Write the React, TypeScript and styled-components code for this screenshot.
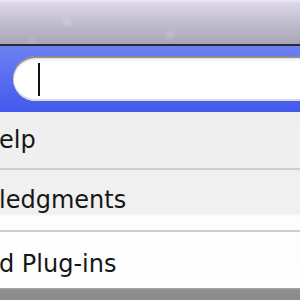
import React from "react";
import styled, { createGlobalStyle } from "styled-components";

const Global = createGlobalStyle`
  html, body { margin: 0; padding: 0; background: #8e8e8e; }
  #root { width: 300px; height: 300px; }
`;

const Frame = styled.div`
  width: 300px;
  height: 300px;
  overflow: hidden;
  display: flex;
  flex-direction: column;
  font-family: "DejaVu Sans", "Liberation Sans", sans-serif;
`;

const TitleBar = styled.div`
  height: 44px;
  flex: none;
  border-bottom: 2px solid #2b2a38;
  background:
    radial-gradient(circle at 67px 22px, rgba(255,255,255,0.22) 0, rgba(255,255,255,0) 7px),
    radial-gradient(circle at 170px 35px, rgba(255,255,255,0.18) 0, rgba(255,255,255,0) 7px),
    radial-gradient(circle at 32px 42px, rgba(255,255,255,0.14) 0, rgba(255,255,255,0) 6px),
    linear-gradient(#efecf6 0px, #dcd7ea 3px, #c4bfd3 20px, #aaa6b7 44px);
`;

const SearchBar = styled.div`
  height: 66px;
  flex: none;
  box-sizing: border-box;
  padding: 10px 0 0 13px;
  background: linear-gradient(#6d81f3, #4458ee);
`;

const Field = styled.div`
  height: 45px;
  margin-right: -40px;
  box-sizing: border-box;
  border-radius: 23px 0 0 23px;
  background: #fff;
  box-shadow:
    inset 0 2px 1px rgba(0, 0, 0, 0.42),
    inset 0 4px 3px rgba(0, 0, 0, 0.08),
    inset 0 -2px 0 #dcdcdc;
  display: flex;
  align-items: center;
  padding-left: 25px;
`;

const Caret = styled.div`
  width: 2px;
  height: 33px;
  margin-top: 1px;
  background: #111;
`;

const List = styled.div`
  flex: none;
  height: 176px;
  background: linear-gradient(#efefef 0, #f0f0f0 102px, #fdfdfd 104px, #fefefe 176px);
  display: flex;
  flex-direction: column;
`;

const Row = styled.div<{ $h: number; $last?: boolean; $shift?: number }>`
  height: ${(p) => p.$h}px;
  flex: none;
  box-sizing: border-box;
  border-bottom: ${(p) => (p.$last ? "none" : "2px solid #cdcdcd")};
  display: flex;
  align-items: center;
  padding-top: ${(p) => p.$shift ?? 0}px;
  font-size: 24px;
  line-height: 28px;
  color: #161616;
  white-space: nowrap;
  overflow: hidden;
`;

const Offstage = styled.span`
  width: 0;
  margin-left: -1px;
  display: inline-flex;
  justify-content: flex-end;
`;

const BottomEdge = styled.div`
  flex: 1;
  background: linear-gradient(#a9a9a9 0, #8f8f8f 2px, #8b8b8b 100%);
`;

function Item({ lead, rest, h, last, shift }: { lead: string; rest: string; h: number; last?: boolean; shift?: number }) {
  return (
    <Row $h={h} $last={last} $shift={shift}>
      <Offstage>{lead}</Offstage>
      <span>{rest}</span>
    </Row>
  );
}

export default function App() {
  return (
    <>
      <Global />
      <Frame>
        <TitleBar />
        <SearchBar>
          <Field>
            <Caret />
          </Field>
        </SearchBar>
        <List>
          <Item lead="H" rest="elp" h={58} />
          <Item lead="Acknow" rest="ledgments" h={62} />
          <Item lead="Installe" rest="d Plug-ins" h={56} last shift={8} />
        </List>
        <BottomEdge />
      </Frame>
    </>
  );
}
